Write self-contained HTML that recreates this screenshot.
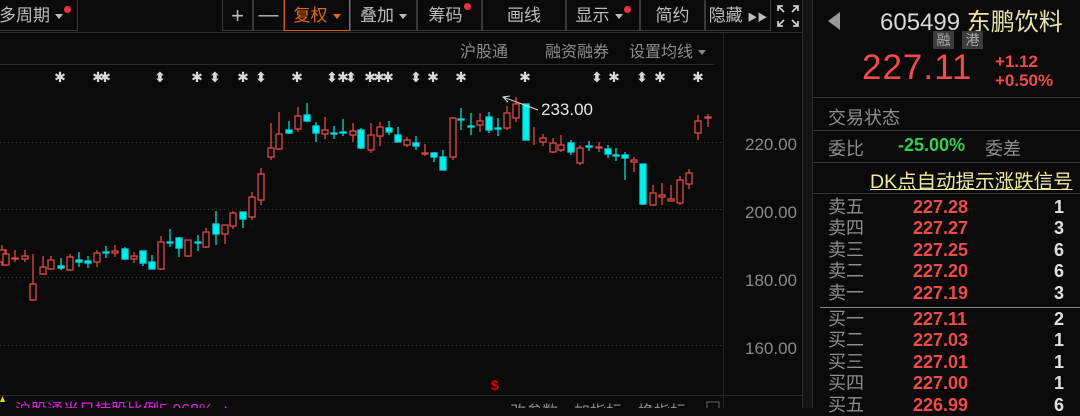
<!DOCTYPE html>
<html><head><meta charset="utf-8">
<style>
html,body{margin:0;padding:0;background:#0a0a0a;width:1080px;height:408px;overflow:hidden;font-family:"Liberation Sans","Noto Sans CJK SC",sans-serif;}
.a{position:absolute;white-space:nowrap}
.tb{position:absolute;top:0;height:31px;border:1px solid #3a3a3a;border-top:none;color:#bdbdbd;font-size:17px;line-height:31px;text-align:center;box-sizing:border-box}
.dot{display:inline-block;width:7px;height:7px;border-radius:50%;background:#f03040;vertical-align:top;margin-top:6px;margin-left:1px}
.tri{display:inline-block;border-left:4px solid transparent;border-right:4px solid transparent;border-top:5px solid #bbb;vertical-align:middle;margin-left:5px}
.ob{position:absolute;left:828px;width:240px;height:21px;font-size:18px;line-height:21px}
.ob .l{position:absolute;left:0;color:#8e8e8e}
.ob .p{position:absolute;left:85px;color:#f04a4a;font-weight:bold;font-size:18px}
.ob .q{position:absolute;right:4px;color:#e0e0e0;font-weight:bold;font-size:18px}
.hl{position:absolute;height:1px;background:#333}
</style></head><body>
<!-- toolbar -->
<div class="tb" style="left:-2px;width:80px;text-align:left;padding-left:0">多周期<span class="tri"></span><span class="dot"></span></div>
<div class="tb" style="left:222px;width:31px;font-size:22px">+</div>
<div class="tb" style="left:253px;width:31px;font-size:20px">—</div>
<div class="tb" style="left:284px;width:66px;border:1px solid #d85a10;border-top:none;color:#e06818">复权<span class="tri" style="border-top-color:#e06818"></span></div>
<div class="tb" style="left:350px;width:67px">叠加<span class="tri"></span></div>
<div class="tb" style="left:417px;width:65px">筹码<span class="dot" style="margin-top:3px"></span></div>
<div class="tb" style="left:482px;width:84px">画线</div>
<div class="tb" style="left:566px;width:74px">显示<span class="tri"></span><span class="dot"></span></div>
<div class="tb" style="left:640px;width:65px">简约</div>
<div class="tb" style="left:705px;width:66px;border:1px solid #3a3a3a;border-top:none">隐藏 <span style="font-size:10px">▶▶</span></div>
<div class="tb" style="left:771px;width:33px;border:none"><svg width="24" height="24" viewBox="0 0 24 24" style="margin-top:4px" fill="none" stroke="#ccc" stroke-width="1.8"><path d="M2 7V2h5M2 2l6 6M22 7V2h-5M22 2l-6 6M2 17v5h5M2 22l6-6M22 17v5h-5M22 22l-6-6"/></svg></div>
<div class="hl" style="left:0;top:32px;width:805px;background:#2e2e2e"></div>
<!-- row2 -->
<div class="a" style="left:460px;top:38px;color:#8c8c8c;font-size:16px">沪股通</div>
<div class="a" style="left:545px;top:38px;color:#8c8c8c;font-size:16px">融资融券</div>
<div class="a" style="left:629px;top:38px;color:#8c8c8c;font-size:16px">设置均线<span class="tri" style="border-top-color:#888"></span></div>
<div class="hl" style="left:0;top:64px;width:715px;background:#2a2a2a"></div>
<div style="position:absolute;left:723px;top:33px;width:1px;height:375px;background:#262626"></div>
<div style="position:absolute;left:802px;top:0;width:11px;height:408px;background:#141414;border-left:1px solid #2e2e2e;border-right:1px solid #2e2e2e;box-sizing:border-box"></div>
<div class="hl" style="left:0;top:395px;width:802px;background:#2a2a2a"></div>
<!-- chart -->
<svg class="a" style="left:0;top:0" width="802" height="408" xmlns="http://www.w3.org/2000/svg">
<g stroke="#3a3a3a" stroke-dasharray="1,3" stroke-width="1">
<line x1="0" y1="142.5" x2="722" y2="142.5"/><line x1="0" y1="209.5" x2="722" y2="209.5"/><line x1="0" y1="277.5" x2="722" y2="277.5"/><line x1="0" y1="345.5" x2="722" y2="345.5"/>
</g>
<g font-family="Liberation Sans" font-size="17" fill="#8a8a8a">
<text x="745" y="150">220.00</text><text x="745" y="218">200.00</text><text x="745" y="286">180.00</text><text x="745" y="354">160.00</text>
</g>
<g font-size="14" fill="#d8d8d8" font-family="DejaVu Sans" text-anchor="middle" font-weight="bold">
<text x="60" y="82">✱</text><text x="98" y="82">✱</text><text x="105" y="82">✱</text><text x="160" y="82">⬍</text><text x="197" y="82">✱</text><text x="215" y="82">⬍</text><text x="243" y="82">✱</text><text x="261" y="82">⬍</text><text x="297" y="82">✱</text><text x="332" y="82">⬍</text><text x="343" y="82">✱</text><text x="351" y="82">⬍</text><text x="370" y="82">✱</text><text x="379" y="82">✱</text><text x="388" y="82">✱</text><text x="416" y="82">⬍</text><text x="433" y="82">✱</text><text x="461" y="82">✱</text><text x="525" y="82">✱</text><text x="597" y="82">⬍</text><text x="614" y="82">✱</text><text x="642" y="82">⬍</text><text x="660" y="82">✱</text><text x="698" y="82">✱</text>
</g>
<g stroke="#e04848" stroke-width="1.3" fill="#0a0a0a">
<line x1="2" y1="245" x2="2" y2="266"/><rect x="-1" y="250" width="6" height="12"/>
<line x1="6" y1="249" x2="6" y2="266"/><rect x="3" y="254" width="6" height="11"/>
<line x1="15" y1="250" x2="15" y2="262"/><rect x="12" y="258" width="6" height="1"/>
<line x1="25" y1="250" x2="25" y2="262"/><rect x="22" y="256" width="6" height="3"/>
<line x1="33" y1="254" x2="33" y2="301"/><rect x="30" y="284" width="6" height="16"/>
<line x1="43" y1="256" x2="43" y2="275"/><rect x="40" y="267" width="6" height="7"/>
<line x1="51" y1="256" x2="51" y2="270"/><rect x="48" y="260" width="6" height="9"/>
<line x1="70" y1="254" x2="70" y2="271"/><rect x="67" y="257" width="6" height="13"/>
<line x1="97" y1="250" x2="97" y2="267"/><rect x="94" y="253" width="6" height="9"/>
<line x1="115" y1="245" x2="115" y2="257"/><rect x="112" y="251" width="6" height="2"/>
<line x1="134" y1="252" x2="134" y2="263"/><rect x="131" y="256" width="6" height="3"/>
<line x1="161" y1="236" x2="161" y2="270"/><rect x="158" y="242" width="6" height="27"/>
<line x1="188" y1="240" x2="188" y2="257"/><rect x="185" y="240" width="6" height="16"/>
<line x1="206" y1="228" x2="206" y2="248"/><rect x="203" y="232" width="6" height="15"/>
<line x1="225" y1="225" x2="225" y2="244"/><rect x="222" y="225" width="6" height="9"/>
<line x1="233" y1="211" x2="233" y2="229"/><rect x="230" y="213" width="6" height="13"/>
<line x1="252" y1="192" x2="252" y2="220"/><rect x="249" y="197" width="6" height="20"/>
<line x1="261" y1="168" x2="261" y2="205"/><rect x="258" y="174" width="6" height="26"/>
<line x1="271" y1="123" x2="271" y2="160"/><rect x="268" y="148" width="6" height="9"/>
<line x1="279" y1="112" x2="279" y2="150"/><rect x="276" y="134" width="6" height="15"/>
<line x1="298" y1="107" x2="298" y2="132"/><rect x="295" y="116" width="6" height="13"/>
<line x1="325" y1="117" x2="325" y2="139"/><rect x="322" y="130" width="6" height="4"/>
<line x1="353" y1="123" x2="353" y2="142"/><rect x="350" y="131" width="6" height="4"/>
<line x1="371" y1="123" x2="371" y2="153"/><rect x="368" y="135" width="6" height="15"/>
<line x1="380" y1="122" x2="380" y2="146"/><rect x="377" y="127" width="6" height="9"/>
<line x1="407" y1="137" x2="407" y2="147"/><rect x="404" y="140" width="6" height="5"/>
<line x1="425" y1="144" x2="425" y2="156"/><rect x="422" y="153" width="6" height="1"/>
<line x1="453" y1="117" x2="453" y2="160"/><rect x="450" y="118" width="6" height="39"/>
<line x1="480" y1="113" x2="480" y2="132"/><rect x="477" y="121" width="6" height="4"/>
<line x1="507" y1="106" x2="507" y2="130"/><rect x="504" y="113" width="6" height="15"/>
<line x1="516" y1="97" x2="516" y2="122"/><rect x="513" y="104" width="6" height="14"/>
<line x1="534" y1="127" x2="534" y2="145"/>
<line x1="543" y1="134" x2="543" y2="146"/><rect x="540" y="138" width="6" height="4"/>
<line x1="553" y1="138" x2="553" y2="153"/><rect x="550" y="143" width="6" height="9"/>
<line x1="561" y1="135" x2="561" y2="152"/><rect x="558" y="145" width="6" height="5"/>
<line x1="580" y1="145" x2="580" y2="165"/><rect x="577" y="148" width="6" height="15"/>
<line x1="599" y1="142" x2="599" y2="152"/><rect x="596" y="147" width="6" height="1"/>
<line x1="634" y1="157" x2="634" y2="172"/><rect x="631" y="160" width="6" height="2"/>
<line x1="653" y1="185" x2="653" y2="206"/><rect x="650" y="193" width="6" height="12"/>
<line x1="662" y1="183" x2="662" y2="205"/><rect x="659" y="195" width="6" height="2"/>
<line x1="671" y1="185" x2="671" y2="201"/><rect x="668" y="199" width="6" height="2"/>
<line x1="680" y1="176" x2="680" y2="205"/><rect x="677" y="180" width="6" height="23"/>
<line x1="689" y1="169" x2="689" y2="189"/><rect x="686" y="173" width="6" height="11"/>
<line x1="698" y1="115" x2="698" y2="140"/><rect x="695" y="121" width="6" height="12"/>
<line x1="708" y1="114" x2="708" y2="127"/><rect x="705" y="117" width="6" height="1"/>
</g>
<g stroke="#00dcdc" stroke-width="1.3" fill="#00f0f0">
<line x1="61" y1="258" x2="61" y2="270"/><rect x="58" y="266" width="6" height="2"/>
<line x1="79" y1="252" x2="79" y2="267"/><rect x="76" y="260" width="6" height="2"/>
<line x1="88" y1="256" x2="88" y2="268"/><rect x="85" y="261" width="6" height="2"/>
<line x1="106" y1="246" x2="106" y2="258"/><rect x="103" y="252" width="6" height="1"/>
<line x1="125" y1="247" x2="125" y2="260"/><rect x="122" y="249" width="6" height="10"/>
<line x1="143" y1="251" x2="143" y2="266"/><rect x="140" y="251" width="6" height="12"/>
<line x1="152" y1="255" x2="152" y2="269"/><rect x="149" y="262" width="6" height="7"/>
<line x1="170" y1="229" x2="170" y2="247"/><rect x="167" y="242" width="6" height="1"/>
<line x1="179" y1="237" x2="179" y2="257"/><rect x="176" y="238" width="6" height="10"/>
<line x1="198" y1="235" x2="198" y2="251"/><rect x="195" y="242" width="6" height="1"/>
<line x1="216" y1="211" x2="216" y2="245"/><rect x="213" y="224" width="6" height="10"/>
<line x1="243" y1="212" x2="243" y2="228"/><rect x="240" y="212" width="6" height="7"/>
<line x1="289" y1="121" x2="289" y2="134"/><rect x="286" y="130" width="6" height="3"/>
<line x1="307" y1="103" x2="307" y2="122"/><rect x="304" y="115" width="6" height="6"/>
<line x1="316" y1="122" x2="316" y2="142"/><rect x="313" y="126" width="6" height="7"/>
<line x1="334" y1="126" x2="334" y2="139"/><rect x="331" y="133" width="6" height="1"/>
<line x1="343" y1="119" x2="343" y2="136"/><rect x="340" y="132" width="6" height="1"/>
<line x1="361" y1="128" x2="361" y2="149"/><rect x="358" y="130" width="6" height="18"/>
<line x1="389" y1="121" x2="389" y2="135"/><rect x="386" y="128" width="6" height="4"/>
<line x1="398" y1="127" x2="398" y2="142"/><rect x="395" y="135" width="6" height="7"/>
<line x1="416" y1="136" x2="416" y2="150"/><rect x="413" y="143" width="6" height="3"/>
<line x1="434" y1="152" x2="434" y2="162"/><rect x="431" y="153" width="6" height="4"/>
<line x1="443" y1="150" x2="443" y2="170"/><rect x="440" y="157" width="6" height="13"/>
<line x1="461" y1="108" x2="461" y2="130"/><rect x="458" y="119" width="6" height="1"/>
<line x1="471" y1="113" x2="471" y2="135"/><rect x="468" y="126" width="6" height="1"/>
<line x1="489" y1="112" x2="489" y2="133"/><rect x="486" y="117" width="6" height="13"/>
<line x1="498" y1="118" x2="498" y2="136"/><rect x="495" y="128" width="6" height="1"/>
<line x1="526" y1="104" x2="526" y2="140"/><rect x="523" y="104" width="6" height="36"/>
<line x1="571" y1="140" x2="571" y2="155"/><rect x="568" y="143" width="6" height="9"/>
<line x1="589" y1="141" x2="589" y2="151"/><rect x="586" y="146" width="6" height="1"/>
<line x1="608" y1="145" x2="608" y2="158"/><rect x="605" y="149" width="6" height="5"/>
<line x1="616" y1="148" x2="616" y2="161"/><rect x="613" y="155" width="6" height="1"/>
<line x1="625" y1="152" x2="625" y2="180"/><rect x="622" y="155" width="6" height="3"/>
<line x1="643" y1="164" x2="643" y2="205"/><rect x="640" y="164" width="6" height="40"/>
</g>
<g stroke="#ddd" stroke-width="1"><line x1="503" y1="97" x2="538" y2="110"/><polyline points="510,96 503,97 508,102" fill="none"/></g>
<text x="541" y="115" font-family="Liberation Sans" font-size="17" fill="#e8e8e8">233.00</text>
<text x="491" y="390" font-family="Liberation Sans" font-size="14" font-weight="bold" fill="#e00000">$</text>
<polygon points="0,402 5,402 2.5,396" fill="#e8e000"/>
<text x="15" y="415" font-family="Liberation Sans,Noto Sans CJK SC" font-size="16" fill="#e020e0">沪股通当日持股比例5.068% ▲</text>
<text x="510" y="417" font-family="Liberation Sans,Noto Sans CJK SC" font-size="16" fill="#888">改参数　加指标　换指标</text>
<rect x="707" y="402" width="12" height="12" fill="none" stroke="#666"/>
</svg>
<!-- right panel -->
<div class="a" style="left:828px;top:12px;width:0;height:0;border-top:9px solid transparent;border-bottom:9px solid transparent;border-right:12px solid #999"></div>
<div class="a" style="left:880px;top:2px;font-size:24px;color:#d8d8d8">605499 <span style="color:#e8e4a8">东鹏饮料</span></div>
<div class="a" style="left:933px;top:31px;width:21px;height:18px;background:#3c3c3c;color:#aaa;font-size:14px;line-height:18px;text-align:center">融</div>
<div class="a" style="left:962px;top:31px;width:21px;height:18px;background:#3c3c3c;color:#aaa;font-size:14px;line-height:18px;text-align:center">港</div>
<div class="a" style="left:862px;top:48px;font-size:35px;color:#f04a4a;letter-spacing:1px">227.11</div>
<div class="a" style="left:995px;top:52px;font-size:17px;color:#f04a4a;font-weight:bold;line-height:19px">+1.12<br>+0.50%</div>
<div class="hl" style="left:813px;top:97px;width:267px;background:#363636"></div>
<div class="a" style="left:828px;top:104px;font-size:18px;color:#8e8e8e">交易状态</div>
<div class="hl" style="left:813px;top:130px;width:267px;background:#363636"></div>
<div class="a" style="left:828px;top:135px;font-size:18px;color:#8e8e8e">委比</div>
<div class="a" style="left:898px;top:135px;font-size:18px;color:#30d050;font-weight:bold">-25.00%</div>
<div class="a" style="left:985px;top:135px;font-size:18px;color:#8e8e8e">委差</div>
<div class="hl" style="left:813px;top:162px;width:267px;background:#363636"></div>
<div class="a" style="left:870px;top:165px;font-size:19.5px;color:#eeeaa0;text-decoration:underline">DK点自动提示涨跌信号</div>
<div class="hl" style="left:813px;top:193px;width:267px;background:#363636"></div>
<div class="ob" style="top:197px"><span class="l">卖五</span><span class="p">227.28</span><span class="q">1</span></div>
<div class="ob" style="top:218px"><span class="l">卖四</span><span class="p">227.27</span><span class="q">3</span></div>
<div class="ob" style="top:240px"><span class="l">卖三</span><span class="p">227.25</span><span class="q">6</span></div>
<div class="ob" style="top:261px"><span class="l">卖二</span><span class="p">227.20</span><span class="q">6</span></div>
<div class="ob" style="top:283px"><span class="l">卖一</span><span class="p">227.19</span><span class="q">3</span></div>
<div class="hl" style="left:820px;top:307px;width:260px;background:#888"></div>
<div class="ob" style="top:309px"><span class="l">买一</span><span class="p">227.11</span><span class="q">2</span></div>
<div class="ob" style="top:330px"><span class="l">买二</span><span class="p">227.03</span><span class="q">1</span></div>
<div class="ob" style="top:352px"><span class="l">买三</span><span class="p">227.01</span><span class="q">1</span></div>
<div class="ob" style="top:373px"><span class="l">买四</span><span class="p">227.00</span><span class="q">1</span></div>
<div class="ob" style="top:395px"><span class="l">买五</span><span class="p">226.99</span><span class="q">6</span></div>
</body></html>
